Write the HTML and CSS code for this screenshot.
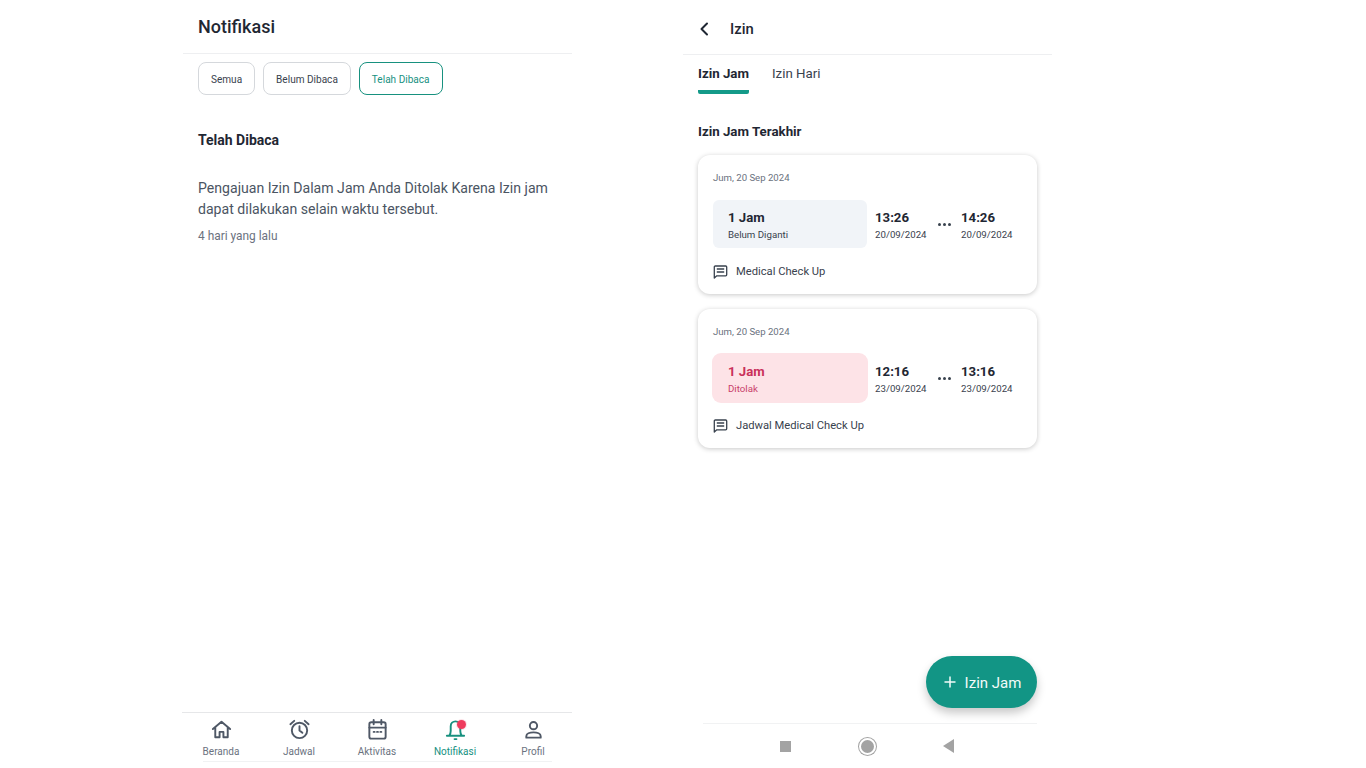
FILE: index.html
```html
<!DOCTYPE html>
<html lang="id">
<head>
    <meta charset="UTF-8" />
    <meta name="viewport" content="width=device-width, initial-scale=1.0" />
    <title>Notifikasi dan Izin</title>
    <link rel="stylesheet" href="styles.css">
</head>
<body>
<div class="screens">
    <section class="phone phone-left">
        <header class="top-bar">
            <h1 class="page-title">Notifikasi</h1>
        </header>
        <div class="chips">
            <button class="chip">Semua</button>
            <button class="chip">Belum Dibaca</button>
            <button class="chip chip-active">Telah Dibaca</button>
        </div>
        <h2 class="section-title">Telah Dibaca</h2>
        <p class="notif-text">Pengajuan Izin Dalam Jam Anda Ditolak Karena Izin jam dapat dilakukan selain waktu tersebut.</p>
        <p class="notif-time">4 hari yang lalu</p>

        <nav class="bottom-nav">
            <a class="nav-item">
                <svg class="nav-icon" viewBox="0 0 24 24"><path d="M3 11.500 12 4l9 7.500M5.500 9.500V20H10v-5.500h4V20h4.500V9.500"/></svg>
                <span>Beranda</span>
            </a>
            <a class="nav-item">
                <svg class="nav-icon" viewBox="0 0 24 24"><circle cx="12" cy="13" r="8"/><path d="M12 8.500V13l3 2.500M2.500 6.500 6.500 3M21.500 6.500 17.500 3"/></svg>
                <span>Jadwal</span>
            </a>
            <a class="nav-item">
                <svg class="nav-icon" viewBox="0 0 24 24"><rect x="3.500" y="4.500" width="17" height="17" rx="2"/><path d="M3.500 10h17M8 2v4.500M16 2v4.500M8 14.500h1M11.500 14.500h1M15 14.500h1"/></svg>
                <span>Aktivitas</span>
            </a>
            <a class="nav-item nav-item-active">
                <span class="bell">
                    <svg class="nav-icon" viewBox="0 0 24 24"><path d="M3 18.500h18M5.500 18.500c1-1.500 1.500-3 1.500-5V8.500a5 5 0 0 1 10 0v5c0 2 .5 3.500 1.500 5M11 22h2"/></svg>
                    <i class="bell-dot"></i>
                </span>
                <span>Notifikasi</span>
            </a>
            <a class="nav-item">
                <svg class="nav-icon" viewBox="0 0 24 24"><circle cx="12" cy="8" r="3.800"/><path d="M4.500 20.500v-1.500c0-2.500 3.500-4 7.500-4s7.500 1.500 7.500 4v1.500z"/></svg>
                <span>Profil</span>
            </a>
        </nav>
        <div class="home-line"></div>
    </section>

    <section class="phone phone-right">
        <header class="top-bar top-bar-back">
            <svg class="back-icon" viewBox="0 0 10 14"><path d="M8 1.500 2.500 7 8 12.500"/></svg>
            <h1 class="back-title">Izin</h1>
        </header>
        <div class="tabs">
            <a class="tab tab-active">Izin Jam</a>
            <a class="tab">Izin Hari</a>
        </div>
        <h2 class="list-title">Izin Jam Terakhir</h2>

        <article class="card">
            <div class="card-date">Jum, 20 Sep 2024</div>
            <div class="card-row">
                <div class="duration">
                    <strong>1 Jam</strong>
                    <span>Belum Diganti</span>
                </div>
                <div class="time-col">
                    <strong>13:26</strong>
                    <span>20/09/2024</span>
                </div>
                <div class="dots"><i></i><i></i><i></i></div>
                <div class="time-col">
                    <strong>14:26</strong>
                    <span>20/09/2024</span>
                </div>
            </div>
            <div class="card-note">
                <svg class="note-icon" viewBox="0 0 14 14"><path d="M.8 2a1 1 0 0 1 1-1h10.400a1 1 0 0 1 1 1v7.800a1 1 0 0 1-1 1H3.300L.8 13zM3.300 4h7.400M3.300 7h7.400"/></svg>
                <span>Medical Check Up</span>
            </div>
        </article>

        <article class="card">
            <div class="card-date">Jum, 20 Sep 2024</div>
            <div class="card-row">
                <div class="duration duration-rejected">
                    <strong>1 Jam</strong>
                    <span>Ditolak</span>
                </div>
                <div class="time-col">
                    <strong>12:16</strong>
                    <span>23/09/2024</span>
                </div>
                <div class="dots"><i></i><i></i><i></i></div>
                <div class="time-col">
                    <strong>13:16</strong>
                    <span>23/09/2024</span>
                </div>
            </div>
            <div class="card-note">
                <svg class="note-icon" viewBox="0 0 14 14"><path d="M.8 2a1 1 0 0 1 1-1h10.400a1 1 0 0 1 1 1v7.800a1 1 0 0 1-1 1H3.300L.8 13zM3.300 4h7.400M3.300 7h7.400"/></svg>
                <span>Jadwal Medical Check Up</span>
            </div>
        </article>

        <button class="fab">
            <svg class="fab-icon" viewBox="0 0 12 12"><path d="M6 .5v11M.5 6h11"/></svg>
            <span class="fab-label">Izin Jam</span>
        </button>

        <div class="system-nav">
            <i class="sys-square"></i>
            <i class="sys-circle"></i>
            <i class="sys-back"></i>
        </div>
    </section>
</div>
</body>
</html>
```

FILE: styles.css
```css
* {
    box-sizing: border-box;
}
html, body {
    height: 100%;
}
body {
    margin: 0;
    background: #fff;
    font-family: Roboto, "Liberation Sans", sans-serif;
    color: #1f2733;
    overflow: hidden;
}
h1, h2, p {
    margin: 0;
}
.screens {
    display: flex;
    height: 768px;
    padding-left: 183px;
    gap: 111px;
}
.phone {
    position: relative;
    height: 768px;
    display: flex;
    flex-direction: column;
}
.phone-left {
    width: 389px;
}
.phone-right {
    width: 369px;
}

.top-bar {
    height: 54px;
    padding: 16px 15px 0;
    border-bottom: 1px solid #eeeff1;
}
.page-title {
    font-size: 18px;
    line-height: 22px;
    font-weight: 500;
}
.chips {
    display: flex;
    gap: 8px;
    padding: 8px 15px 0;
}
.chip {
    height: 33px;
    padding: 1px 12px 0;
    border: 1px solid #d5d8dc;
    border-radius: 8px;
    background: #fff;
    font: 400 10.050px Roboto, sans-serif;
    color: #39424e;
}
.chip-active {
    border-color: #17917f;
    color: #17917f;
}
.section-title {
    margin: 36px 15px 0;
    font-size: 14px;
    line-height: 18px;
    font-weight: 700;
}
.notif-text {
    margin: 29px 15px 0;
    font-size: 14.100px;
    line-height: 21px;
    color: #4b5563;
}
.notif-time {
    margin: 8px 15px 0;
    font-size: 11.900px;
    line-height: 16px;
    color: #6b7280;
}

.bottom-nav {
    margin: auto 0 0 -1px;
    width: 390px;
    height: 49px;
    display: flex;
    border-top: 1px solid #e6e7e9;
}
.nav-item {
    flex: 1;
    display: flex;
    flex-direction: column;
    align-items: center;
    padding-top: 5px;
    font-size: 10px;
    line-height: 13px;
    color: #6b7280;
    gap: 4px;
}
.nav-icon {
    display: block;
    width: 23px;
    height: 23px;
    fill: none;
    stroke: #4f5866;
    stroke-width: 2;
    stroke-linecap: round;
    stroke-linejoin: round;
}
.nav-item-active {
    color: #17917f;
}
.nav-item-active .nav-icon {
    stroke: #17917f;
}
.bell {
    position: relative;
    display: block;
}
.bell-dot {
    position: absolute;
    top: 1.500px;
    right: 1px;
    width: 9px;
    height: 9px;
    border-radius: 50%;
    background: #ee3b5d;
    box-shadow: 0 0 0 1px rgba(238, 59, 93, 0.15);
}
.home-line {
    height: 7px;
    margin: 0 20px;
    border-top: 1px solid #f1f2f3;
}

.top-bar-back {
    height: 55px;
    display: flex;
    align-items: center;
    padding: 4px 16px 0;
    gap: 21px;
}
.back-icon {
    width: 10px;
    height: 14px;
    fill: none;
    stroke: #1f2733;
    stroke-width: 2;
    stroke-linecap: round;
    stroke-linejoin: round;
}
.back-title {
    font-size: 14.800px;
    font-weight: 500;
}
.tabs {
    display: flex;
    gap: 23px;
    padding: 0 15px;
}
.tab {
    height: 39px;
    padding-top: 10px;
    font-size: 13.300px;
    line-height: 17px;
    color: #39424e;
}
.tab-active {
    font-weight: 700;
    color: #1f2733;
    border-bottom: 4px solid #149a89;
    border-radius: 0 0 2px 2px;
}
.list-title {
    margin: 30px 15px 15px;
    font-size: 13.300px;
    line-height: 16px;
    font-weight: 700;
}

.card {
    width: 339px;
    height: 139px;
    margin: 0 15px 15px;
    padding: 15px;
    background: #fff;
    border-radius: 12px;
    box-shadow: 0 1px 5px rgba(0, 0, 0, 0.22);
}
.card-date {
    font-size: 9.600px;
    line-height: 16px;
    color: #6b7280;
}
.card-row {
    display: flex;
    align-items: center;
    margin-top: 14px;
}
.duration {
    width: 154px;
    height: 48px;
    margin-right: 8px;
    padding: 9px 15px 0;
    background: #f1f4f8;
    border-radius: 6px;
}
.duration strong, .time-col strong {
    display: block;
    font-size: 13.200px;
    line-height: 17px;
    font-weight: 700;
}
.duration span, .time-col span {
    display: block;
    font-size: 9.700px;
    line-height: 12px;
    margin-top: 3px;
    color: #39424e;
}
.duration-rejected {
    background: #fde3e7;
    box-shadow: 0 0 0 1px #fde3e7;
    border-radius: 8px;
}
.duration-rejected strong {
    color: #c9305a;
}
.duration-rejected span {
    color: #c9406a;
}
.time-col {
    width: 52px;
    padding-top: 1px;
}
.dots {
    width: 34px;
    display: flex;
    justify-content: center;
    gap: 2px;
}
.dots i {
    width: 3px;
    height: 3px;
    border-radius: 50%;
    background: #39424e;
}
.card-note {
    display: flex;
    align-items: center;
    gap: 8px;
    margin-top: 16px;
    font-size: 11.200px;
    line-height: 16px;
    color: #39424e;
}
.note-icon {
    width: 15px;
    height: 14px;
    fill: none;
    stroke: #39424e;
    stroke-width: 1.300;
    stroke-linejoin: round;
}

.fab {
    position: absolute;
    top: 656px;
    right: 15px;
    width: 111px;
    height: 52px;
    padding: 0 0 0 2px;
    border: none;
    border-radius: 26px;
    background: #129585;
    color: #f2fbf9;
    font: 400 15px Roboto, sans-serif;
    display: flex;
    align-items: center;
    justify-content: center;
    gap: 9px;
    box-shadow: 0 5px 10px rgba(0, 0, 0, 0.22);
}
.fab-label {
    padding-top: 1px;
}
.fab-icon {
    width: 12px;
    height: 12px;
    fill: none;
    stroke: #f2fbf9;
    stroke-width: 1.500;
}
.system-nav {
    position: absolute;
    top: 723px;
    left: 20px;
    width: 334px;
    height: 45px;
    border-top: 1px solid #f1f2f3;
    display: flex;
    align-items: center;
    padding-left: 77px;
}
.sys-square {
    width: 11px;
    height: 11px;
    background: #a3a3a3;
}
.sys-circle {
    width: 17px;
    height: 17px;
    margin-left: 68px;
    border-radius: 50%;
    background: #a3a3a3;
    border: 2px solid #fff;
    box-shadow: 0 0 0 1px #a3a3a3;
}
.sys-back {
    width: 0;
    height: 0;
    margin-left: 67px;
    border-top: 7px solid transparent;
    border-bottom: 7px solid transparent;
    border-right: 11px solid #a3a3a3;
}
```
